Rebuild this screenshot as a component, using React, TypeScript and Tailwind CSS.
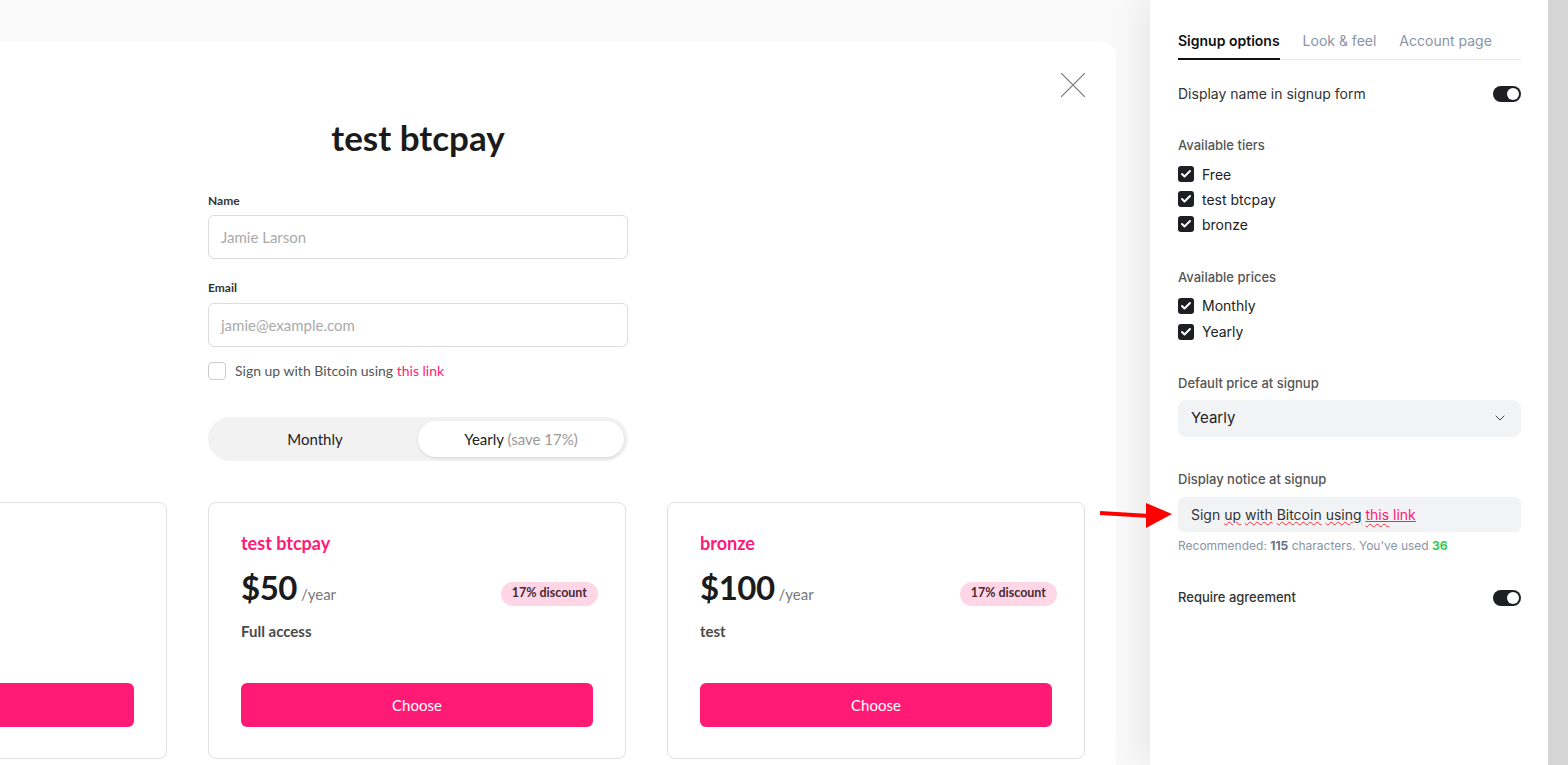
import React, { useState } from 'react';
import { ChevronDown, Check } from 'lucide-react';

const tiers = ['Free', 'test btcpay', 'bronze'];
const prices = ['Monthly', 'Yearly'];

const plans = [
    { name: 'Free', price: '$0', note: 'Basic', discount: false },
    { name: 'test btcpay', price: '$50', note: 'Full access', discount: true },
    { name: 'bronze', price: '$100', note: 'test', discount: true },
];

const Toggle: React.FC<{ on: boolean }> = ({ on }) => (
    <div className={`w-[28px] h-[16px] rounded-full flex items-center px-[2px] ${on ? 'bg-[#1d1f23] justify-end' : 'bg-gray-300 justify-start'}`}>
        <div className="w-[12px] h-[12px] rounded-full bg-white" />
    </div>
);

const CheckRow: React.FC<{ label: string }> = ({ label }) => (
    <label className="flex items-center gap-[8px] h-[25px] text-[14px] text-[#222]">
        <span className="w-[16px] h-[16px] rounded-[3px] bg-[#1d1f23] flex items-center justify-center">
            <Check className="w-[12px] h-[12px] text-white" strokeWidth={4} />
        </span>
        {label}
    </label>
);

const PlanCard: React.FC<{ plan: typeof plans[number] }> = ({ plan }) => (
    <div className="w-[418px] h-[257px] shrink-0 border border-[#e0e0e0] rounded-lg px-[32px] pt-[28px] flex flex-col">
        <div className="text-[18px] font-bold text-[#ff1a75] leading-[24px]">{plan.name}</div>
        <div className="flex items-end justify-between mt-[14px]">
            <div className="flex items-baseline gap-[4px]">
                <span className="text-[33px] font-bold text-[#1b1b1b] leading-[36px] tracking-[-0.5px]">{plan.price}</span>
                <span className="text-[15px] text-[#777]">/year</span>
            </div>
            {plan.discount && (
                <span className="mr-[-5px] px-[11px] h-[24px] flex items-center rounded-full bg-[#ffd6e6] text-[12.5px] font-bold text-[#4a2a37]">
                    17% discount
                </span>
            )}
        </div>
        <div className="mt-[14px] text-[15px] font-bold text-[#4a4a4a]">{plan.note}</div>
        <button className="mt-[41px] w-full h-[44px] rounded-md bg-[#ff1a75] text-white text-[15px]">Choose</button>
    </div>
);

export default function App() {
    const [period, setPeriod] = useState<'monthly' | 'yearly'>('yearly');

    return (
        <div className="relative w-full h-screen flex overflow-hidden bg-[#f9f9f9]">
            {/* preview area */}
            <div className="flex-1 min-w-0 overflow-hidden pt-[41px]" style={{ fontFamily: 'Lato, "Open Sans", sans-serif' }}>
                <div className="relative ml-[-280px] w-[1396px] h-[760px] bg-white rounded-tr-2xl flex flex-col items-center">
                    <button className="absolute top-[32px] right-[31px] w-[24px] h-[24px]" aria-label="Close">
                        <svg viewBox="0 0 24 24" className="w-full h-full" fill="none" stroke="#777" strokeWidth="1.2">
                            <path d="M0 0L24 24M24 0L0 24" />
                        </svg>
                    </button>

                    <h1 className="mt-[74px] text-[35px] font-bold text-[#1b1b1b] leading-[44px]">test btcpay</h1>

                    <div className="w-[420px] mt-[34px] flex flex-col">
                        <label className="text-[12px] font-bold text-[#333] leading-[16px]">Name</label>
                        <div className="mt-[6px] h-[44px] border border-[#dcdcdc] rounded-md px-[12px] flex items-center text-[15px] text-[#aaa]">Jamie Larson</div>
                        <label className="mt-[21px] text-[12px] font-bold text-[#333] leading-[16px]">Email</label>
                        <div className="mt-[7px] h-[44px] border border-[#dcdcdc] rounded-md px-[12px] flex items-center text-[15px] text-[#aaa]">jamie@example.com</div>
                        <div className="mt-[13px] flex items-center gap-[9px] text-[14px] text-[#555]">
                            <span className="w-[18px] h-[18px] border border-[#ccc] rounded-[4px]" />
                            <span>Sign up with Bitcoin using <span className="text-[#ff1a75]">this link</span></span>
                        </div>

                        <div className="mt-[36px] h-[44px] rounded-full bg-[#f2f2f2] p-[4px] flex text-[15px]">
                            <button
                                onClick={() => setPeriod('monthly')}
                                className={`flex-1 rounded-full ${period === 'monthly' ? 'bg-white shadow-[0_1px_3px_rgba(0,0,0,0.12)]' : ''} text-[#222]`}
                            >
                                Monthly
                            </button>
                            <button
                                onClick={() => setPeriod('yearly')}
                                className={`flex-1 rounded-full ${period === 'yearly' ? 'bg-white shadow-[0_1px_3px_rgba(0,0,0,0.12)]' : ''} text-[#222]`}
                            >
                                Yearly <span className="text-[#999]">(save 17%)</span>
                            </button>
                        </div>
                    </div>

                    <div className="mt-[41px] flex gap-[41px] ml-[-2px]">
                        {plans.map(p => <PlanCard key={p.name} plan={p} />)}
                    </div>
                </div>
            </div>

            {/* settings panel */}
            <aside
                className="w-[398px] shrink-0 bg-white px-[28px] pr-[27px] pt-[30px] shadow-[-12px_0_28px_rgba(0,0,0,0.06)] z-10"
                style={{ fontFamily: 'Inter, "Noto Sans", sans-serif' }}
            >
                <div className="flex gap-[23px] border-b border-[#e3e5e8] text-[14px]">
                    <div className="font-semibold text-[#111] pb-[7px] border-b-2 border-[#111] mb-[-1px]">Signup options</div>
                    <div className="text-[#8a94a6] pb-[7px]">Look &amp; feel</div>
                    <div className="text-[#8a94a6] pb-[7px]">Account page</div>
                </div>

                <div className="mt-[23px] flex items-center justify-between text-[14px] text-[#333]">
                    <span>Display name in signup form</span>
                    <Toggle on />
                </div>

                <div className="mt-[32px] text-[13px] font-medium text-[#555]">Available tiers</div>
                <div className="mt-[6px] flex flex-col">
                    {tiers.map(t => <CheckRow key={t} label={t} />)}
                </div>

                <div className="mt-[31px] text-[13px] font-medium text-[#555]">Available prices</div>
                <div className="mt-[6px] flex flex-col gap-[1px]">
                    {prices.map(t => <CheckRow key={t} label={t} />)}
                </div>

                <div className="mt-[30px] text-[13px] font-medium text-[#555]">Default price at signup</div>
                <div className="mt-[6px] h-[37px] rounded-lg bg-[#f2f3f5] px-[13px] flex items-center justify-between text-[15px] text-[#222]">
                    <span>Yearly</span>
                    <ChevronDown className="w-[16px] h-[16px] text-[#444]" strokeWidth={1.5} />
                </div>

                <div className="mt-[33px] text-[13px] font-medium text-[#555]">Display notice at signup</div>
                <div className="mt-[8px] h-[35px] rounded-md bg-[#f2f3f5] px-[13px] flex items-center text-[14px] text-[#333] whitespace-pre">
                    <span>Sign </span>
                    <span className="underline decoration-wavy decoration-red-500 decoration-1">up</span>
                    <span> </span>
                    <span className="underline decoration-wavy decoration-red-500 decoration-1">with</span>
                    <span> </span>
                    <span className="underline decoration-wavy decoration-red-500 decoration-1">Bitcoin</span>
                    <span> </span>
                    <span className="underline decoration-wavy decoration-red-500 decoration-1">using</span>
                    <span> </span>
                    <span className="text-[#ff1a75] underline decoration-[#ff1a75]">
                        <span className="underline decoration-wavy decoration-red-500 decoration-1 underline-offset-[3px]">this</span> link
                    </span>
                </div>
                <div className="mt-[5px] text-[12px] text-[#8a94a6]">
                    Recommended: <span className="font-bold text-[#6b7280]">115</span> characters. You've used <span className="font-bold text-[#33cc55]">36</span>
                </div>

                <div className="mt-[33px] flex items-center justify-between text-[13px] font-medium text-[#333]">
                    <span>Require agreement</span>
                    <Toggle on />
                </div>
            </aside>

            <div className="w-[20px] shrink-0 bg-[#d6d6d6]" />

            {/* annotation arrow */}
            <svg className="absolute left-[1098px] top-[501px] w-[76px] h-[30px] z-20" viewBox="0 0 76 30">
                <path d="M2 12L52 15" stroke="#ff0000" strokeWidth="4" />
                <path d="M48 2L74 13L48 27Z" fill="#ff0000" />
            </svg>
        </div>
    );
}
